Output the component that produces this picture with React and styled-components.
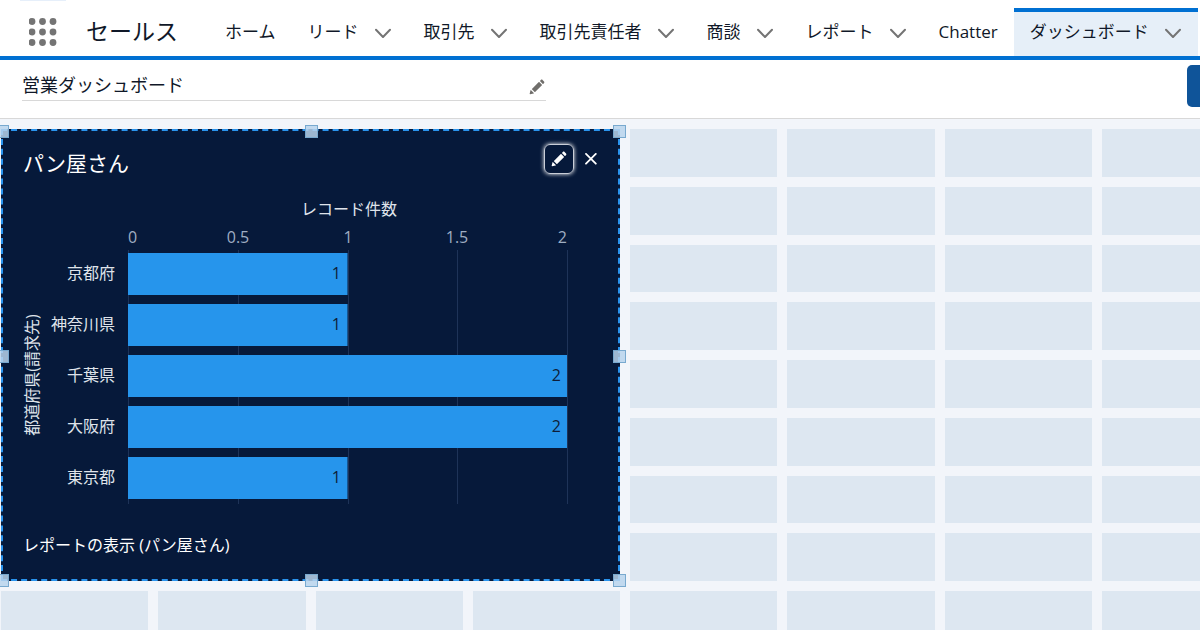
import React from "react";
import styled, { createGlobalStyle, css } from "styled-components";

const GlobalStyle = createGlobalStyle`
  *, *::before, *::after { box-sizing: border-box; }
  body {
    margin: 0;
    color: #101828;
    background: #ffffff;
    font-family: "Open Sans", "Noto Sans CJK JP", sans-serif;
  }
  button, a { font: inherit; color: inherit; }
  button { border: 0; padding: 0; background: none; cursor: pointer; }
  a { text-decoration: none; }
  h1, h2, p { margin: 0; font-weight: 400; }
`;

const Page = styled.div`
  display: flex;
  flex-direction: column;
  height: 100vh;
  overflow: hidden;
`;

const GlobalHeader = styled.header`
  display: flex;
  flex: none;
  height: 60px;
  padding: 0 0 0 20px;
  border-bottom: 4px solid #0070d2;
  white-space: nowrap;
`;

const Launcher = styled.button`
  display: flex;
  flex: none;
  align-items: center;
  justify-content: center;
  width: 46px;
  padding-top: 7px;
  border-top: 1px solid #e6effa;
  color: #747474;
`;

const AppName = styled.span`
  flex: none;
  width: 143px;
  padding: 8px 0 0 20px;
  font-size: 23px;
  line-height: 46px;
`;

const Nav = styled.nav`
  display: flex;
  padding-top: 8px;
`;

const Tab = styled.div`
  display: flex;
  flex: none;
  align-items: center;
  gap: 16px;
  padding: 0 16px;
  font-size: 17px;
  line-height: 24px;
  ${(p) =>
    p.$active &&
    css`
      background: #e6eff8;
      box-shadow: inset 0 4px 0 #0070d2;
    `}
`;

const TabMenu = styled.button`
  display: flex;
  width: 17px;
  height: 20px;
  align-items: flex-end;
  justify-content: center;
  padding-bottom: 4px;
  color: #747474;
`;

const Toolbar = styled.div`
  display: flex;
  flex: none;
  align-items: flex-start;
  justify-content: space-between;
  height: 59px;
  padding-left: 22px;
  border-bottom: 1px solid #d8d8d8;
`;

const NameField = styled.div`
  display: flex;
  align-items: center;
  justify-content: space-between;
  width: 524px;
  height: 41px;
  padding: 10px 1px 0 0;
  border-bottom: 1px solid #d8d8d8;
`;

const DashboardName = styled.h1`
  font-size: 18px;
  line-height: 28px;
`;

const NameEdit = styled.button`
  display: flex;
  padding-top: 3px;
  color: #706e6b;
`;

const PrimaryButton = styled.button`
  width: 80px;
  height: 42px;
  margin: 5px -67px 0 0;
  border-radius: 5px;
  background: #0f5499;
`;

const Board = styled.main`
  flex: 1;
  min-height: 0;
  padding: 10px 0 0 1px;
  overflow: hidden;
  background: #f2f5fa;
`;

const Grid = styled.div`
  display: grid;
  grid-template-columns: repeat(8, 1fr);
  grid-auto-rows: 1fr;
  gap: 10px;
  margin-right: -49px;
`;

const Cell = styled.div`
  background: #dde7f1;
`;

const Widget = styled.section`
  position: relative;
  display: flex;
  flex-direction: column;
  grid-area: 1 / 1 / span 8 / span 4;
  height: 452px;
  border: 2px dashed #2a94ee;
  background: #06193a;
  color: #ffffff;
`;

const WidgetHeader = styled.div`
  display: flex;
  align-items: flex-start;
  height: 60px;
  padding: 13px 12px 0 20px;
`;

const WidgetTitle = styled.h2`
  flex: 1;
  font-size: 21px;
  line-height: 38px;
`;

const WidgetActions = styled.div`
  display: flex;
  gap: 2px;
`;

const IconButton = styled.button`
  display: flex;
  align-items: center;
  justify-content: center;
  width: 30px;
  height: 30px;
  border-radius: 6px;
  ${(p) =>
    p.$focused &&
    css`
      border: 1px solid #c9ced8;
      box-shadow: 0 0 4px #ffffff;
    `}
`;

const Chart = styled.svg`
  display: block;
  width: 100%;
  font-size: 16px;
`;

const WidgetFooter = styled.div`
  display: flex;
  flex: 1;
  align-items: center;
  padding-left: 20px;
  font-size: 16px;
  line-height: 24px;
`;

const ResizeFrame = styled.div`
  position: absolute;
  inset: 0 -2px -1px 0;
  pointer-events: none;
`;

const Handle = styled.span`
  position: absolute;
  left: ${(p) => p.$x};
  top: ${(p) => p.$y};
  width: 13px;
  height: 13px;
  margin: -6px 0 0 -7px;
  border: 1px solid #78a9cf;
  background: rgba(184, 212, 236, 0.85);
`;

const PENCIL =
  "M9.5 33.4l8.9 8.9c.4.4 1 .4 1.4 0L42 20c.4-.4.4-1 0-1.4l-8.8-8.8c-.4-.4-1-.4-1.4 0L9.5 32.1c-.4.4-.4 1 0 1.3zM36.1 5.7c-.4.4-.4 1 0 1.4l8.8 8.8c.4.4 1 .4 1.4 0l2.5-2.5c1.6-1.5 1.6-3.9 0-5.5l-4.7-4.7c-1.6-1.6-4.1-1.6-5.7 0l-2.3 2.5zM2.1 48.2c-.2 1 .7 1.9 1.7 1.7l10.9-2.6c.4-.1.7-.3.9-.5l.2-.2c.2-.2.3-.9-.1-1.3l-9-9c-.4-.4-1.1-.3-1.3-.1l-.2.2c-.3.3-.4.6-.5.9L2.1 48.2z";

const PencilIcon = () => (
  <svg width="16" height="16" viewBox="0 0 52 52" fill="currentColor" aria-hidden="true">
    <path d={PENCIL} />
  </svg>
);

const ChevronIcon = () => (
  <svg width="16" height="10" viewBox="0 0 16 10" fill="none" stroke="currentColor" strokeWidth="2" strokeLinecap="round" strokeLinejoin="round" aria-hidden="true">
    <path d="M1 1.7 8 9 15 1.7" />
  </svg>
);

const CloseIcon = () => (
  <svg width="12" height="12" viewBox="0 0 12 12" fill="none" stroke="currentColor" strokeWidth="1.8" strokeLinecap="round" aria-hidden="true">
    <path d="M1 .9 10.8 10.7M10.8 .9 1 10.7" />
  </svg>
);

const WaffleIcon = () => (
  <svg width="28" height="28" viewBox="0 0 28 28" fill="currentColor" aria-hidden="true">
    {[3.5, 14, 24.5].map((y) => [3, 13.5, 24].map((x) => <circle key={`${x}-${y}`} cx={x} cy={y} r="3.4" />))}
  </svg>
);

const TABS = [
  { label: "ホーム" },
  { label: "リード", menu: true },
  { label: "取引先", menu: true },
  { label: "取引先責任者", menu: true },
  { label: "商談", menu: true },
  { label: "レポート", menu: true },
  { label: "Chatter" },
  { label: "ダッシュボード", menu: true, active: true },
];

const ROWS = [
  { name: "京都府", count: 1 },
  { name: "神奈川県", count: 1 },
  { name: "千葉県", count: 2 },
  { name: "大阪府", count: 2 },
  { name: "東京都", count: 1 },
];

const TICKS = [
  { label: "0", x: 125, anchor: "start" },
  { label: "0.5", x: 235, anchor: "middle" },
  { label: "1", x: 345, anchor: "middle" },
  { label: "1.5", x: 454, anchor: "middle" },
  { label: "2", x: 564, anchor: "end" },
];

const HANDLES = ["0%", "50%", "100%"].flatMap((x) =>
  ["0%", "50%", "100%"].filter((y) => !(x === "50%" && y === "50%")).map((y) => ({ x, y }))
);

const CountChart = () => (
  <Chart viewBox="0 0 615 320" role="img" aria-label="レコード件数">
    <text x="346" y="24" textAnchor="middle" fill="#dfe3ea">レコード件数</text>
    <text transform="translate(35 184) rotate(-90)" textAnchor="middle" fill="#dfe3ea">都道府県(請求先)</text>
    {TICKS.map((t) => (
      <g key={t.label}>
        <rect x={t.x} y="59" width="1" height="254" fill="#1e3358" />
        <text x={t.x} y="52" textAnchor={t.anchor} fill="#9fadc2">{t.label}</text>
      </g>
    ))}
    {ROWS.map((r, i) => (
      <g key={r.name}>
        <text x="112" y={88 + i * 51} textAnchor="end" fill="#dfe3ea">{r.name}</text>
        <rect x="125" y={62 + i * 51} width={r.count * 219.5} height="42" fill="#2695ec" />
        <text x={118 + r.count * 220} y={88 + i * 51} textAnchor="end" fill="#0e1d38">{r.count}</text>
      </g>
    ))}
  </Chart>
);

export default function App() {
  return (
    <Page>
      <GlobalStyle />
      <GlobalHeader>
        <Launcher aria-label="アプリケーションランチャー"><WaffleIcon /></Launcher>
        <AppName>セールス</AppName>
        <Nav>
          {TABS.map((t) => (
            <Tab key={t.label} $active={t.active}>
              <a href="#">{t.label}</a>
              {t.menu && <TabMenu aria-label={t.label}><ChevronIcon /></TabMenu>}
            </Tab>
          ))}
        </Nav>
      </GlobalHeader>
      <Toolbar>
        <NameField>
          <DashboardName>営業ダッシュボード</DashboardName>
          <NameEdit aria-label="編集"><PencilIcon /></NameEdit>
        </NameField>
        <PrimaryButton aria-label="追加" />
      </Toolbar>
      <Board>
        <Grid>
          <Widget>
            <WidgetHeader>
              <WidgetTitle>パン屋さん</WidgetTitle>
              <WidgetActions>
                <IconButton $focused aria-label="編集"><PencilIcon /></IconButton>
                <IconButton aria-label="削除"><CloseIcon /></IconButton>
              </WidgetActions>
            </WidgetHeader>
            <CountChart />
            <WidgetFooter><a href="#">レポートの表示 (パン屋さん)</a></WidgetFooter>
            <ResizeFrame>
              {HANDLES.map((h) => <Handle key={h.x + h.y} $x={h.x} $y={h.y} />)}
            </ResizeFrame>
          </Widget>
          {Array.from({ length: 40 }, (_, i) => <Cell key={i} />)}
        </Grid>
      </Board>
    </Page>
  );
}
